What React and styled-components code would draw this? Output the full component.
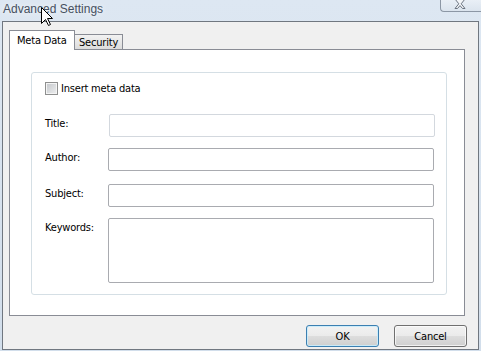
import React from 'react';
import styled, { createGlobalStyle } from 'styled-components';

const uiFont = `"DejaVu Sans Condensed", "Liberation Sans", Arial, sans-serif`;

const Global = createGlobalStyle`
  html, body { margin: 0; padding: 0; }
  body {
    width: 481px;
    height: 351px;
    overflow: hidden;
    font-family: ${uiFont};
    font-size: 11px;
    letter-spacing: -0.2px;
    color: #000;
  }
`;

const Window = styled.div`
  position: relative;
  width: 481px;
  height: 351px;
  box-sizing: border-box;
  display: flex;
  flex-direction: column;
  background: linear-gradient(#dde7f2, #d2deeb);
`;

const TitleBar = styled.div`
  height: 21px;
  flex: none;
  display: flex;
  align-items: flex-start;
  padding-left: 3px;
`;

const TitleText = styled.span`
  font-family: "Liberation Sans", Arial, sans-serif;
  font-size: 12px;
  letter-spacing: 0;
  line-height: 18px;
  color: #465060;
  text-shadow: 0 0 6px rgba(255, 255, 255, 0.9);
`;

const CloseButton = styled.div`
  margin-left: auto;
  width: 41px;
  height: 12px;
  box-sizing: border-box;
  border: 1px solid #8c97a5;
  border-top: none;
  border-right: none;
  border-radius: 0 0 0 4px;
  background: linear-gradient(#e9eff6, #dbe4ee);
  display: flex;
  justify-content: center;
  padding-right: 2px;
`;

const Cursor = styled.svg`
  position: absolute;
  left: 41px;
  top: 7px;
  pointer-events: none;
`;

const Client = styled.div`
  flex: 1;
  margin: 0 2px 1px 2px;
  border: 1px solid #707780;
  background: #f0f0f0;
  padding: 8px 13px 2px 6px;
  display: flex;
  flex-direction: column;
  min-height: 0;
`;

const TabStrip = styled.div`
  height: 19px;
  flex: none;
  display: flex;
  align-items: flex-end;
`;

const Tab = styled.div`
  position: relative;
  box-sizing: border-box;
  border: 1px solid #898c95;
  border-bottom: none;
  line-height: 14px;
  white-space: nowrap;
  ${({ $active }) =>
    $active
      ? `
    z-index: 2;
    width: 66px;
    height: 20px;
    margin-bottom: -1px;
    background: #fff;
    padding: 3px 0 0 7px;
  `
      : `
    z-index: 1;
    width: 49px;
    height: 15px;
    margin-left: -1px;
    background: linear-gradient(#f2f2f2, #dcdcdc);
    padding: 1px 0 0 4px;
  `}
`;

const Panel = styled.div`
  flex: none;
  height: 267px;
  box-sizing: border-box;
  border: 1px solid #898c95;
  background: #fff;
  padding: 22px 17px 20px 21px;
  display: flex;
  flex-direction: column;
`;

const Group = styled.div`
  flex: 1;
  border: 1px solid #d5dfe5;
  border-radius: 3px;
  padding: 9px 12px 11px 13px;
  display: flex;
  flex-direction: column;
`;

const CheckRow = styled.label`
  display: flex;
  align-items: center;
  height: 13px;
  margin-bottom: 19px;
`;

const CheckBox = styled.span`
  width: 13px;
  height: 13px;
  box-sizing: border-box;
  border: 1px solid #8e8f8f;
  background: linear-gradient(135deg, #c3c6ca, #eeeff0);
  box-shadow: inset 0 0 0 1px #f4f4f4;
  margin-right: 3px;
  flex: none;
`;

const Row = styled.div`
  display: flex;
  margin-top: ${({ $gap }) => $gap}px;
`;

const Label = styled.span`
  width: 63px;
  flex: none;
  padding-top: 2px;
  line-height: 15px;
`;

const Field = styled.div`
  flex: 1;
  height: ${({ $h }) => $h}px;
  box-sizing: border-box;
  border: 1px solid ${({ $disabled }) => ($disabled ? '#d3d8de' : '#a9abb0')};
  border-radius: 2px;
  background: #fff;
  margin-left: ${({ $disabled }) => ($disabled ? 1 : 0)}px;
  margin-right: ${({ $disabled }) => ($disabled ? -1 : 0)}px;
`;

const ButtonRow = styled.div`
  display: flex;
  justify-content: flex-end;
  gap: 15px;
  margin-top: 9px;
  margin-right: -2px;
`;

const Button = styled.button`
  width: 73px;
  height: 22px;
  box-sizing: border-box;
  border: 1px solid ${({ $default }) => ($default ? '#3c7fb1' : '#707070')};
  border-radius: 3px;
  background: linear-gradient(#f2f2f2 0%, #ebebeb 48%, #dddddd 52%, #cfcfcf 100%);
  box-shadow: inset 0 0 0 1px ${({ $default }) => ($default ? 'rgba(200,236,252,0.9)' : 'rgba(255,255,255,0.7)')};
  font-family: ${uiFont};
  font-size: 11px;
  letter-spacing: -0.2px;
  color: #000;
  padding: 0;
`;

export default function App() {
  return (
    <>
      <Global />
      <Window>
        <TitleBar>
          <TitleText>Advanced Settings</TitleText>
          <CloseButton>
            <svg width="14" height="10" viewBox="0 0 14 10">
              <path
                d="M2 -1 L5.8 3.8 L2 8.5 L4.5 8.5 L7 5.6 L9.5 8.5 L12 8.5 L8.2 3.8 L12 -1"
                fill="#f4f6f9"
                stroke="#6b7480"
                strokeWidth="1"
                strokeLinejoin="round"
              />
            </svg>
          </CloseButton>
        </TitleBar>
        <Client>
          <TabStrip>
            <Tab $active>Meta Data</Tab>
            <Tab>Security</Tab>
          </TabStrip>
          <Panel>
            <Group>
              <CheckRow>
                <CheckBox />
                Insert meta data
              </CheckRow>
              <Row $gap={0}>
                <Label>Title:</Label>
                <Field $h={23} $disabled />
              </Row>
              <Row $gap={11}>
                <Label>Author:</Label>
                <Field $h={23} />
              </Row>
              <Row $gap={13}>
                <Label>Subject:</Label>
                <Field $h={23} />
              </Row>
              <Row $gap={11}>
                <Label>Keywords:</Label>
                <Field $h={65} />
              </Row>
            </Group>
          </Panel>
          <ButtonRow>
            <Button $default>OK</Button>
            <Button>Cancel</Button>
          </ButtonRow>
        </Client>
        <Cursor width="14" height="20" viewBox="0 0 14 20">
          <polygon
            points="0.5,0.5 0.5,16.5 4.5,12.5 7.5,18.5 9.5,17.5 6.5,11.5 11.5,11.5"
            fill="#fff"
            stroke="#000"
            strokeWidth="1"
            strokeLinejoin="miter"
          />
        </Cursor>
      </Window>
    </>
  );
}
